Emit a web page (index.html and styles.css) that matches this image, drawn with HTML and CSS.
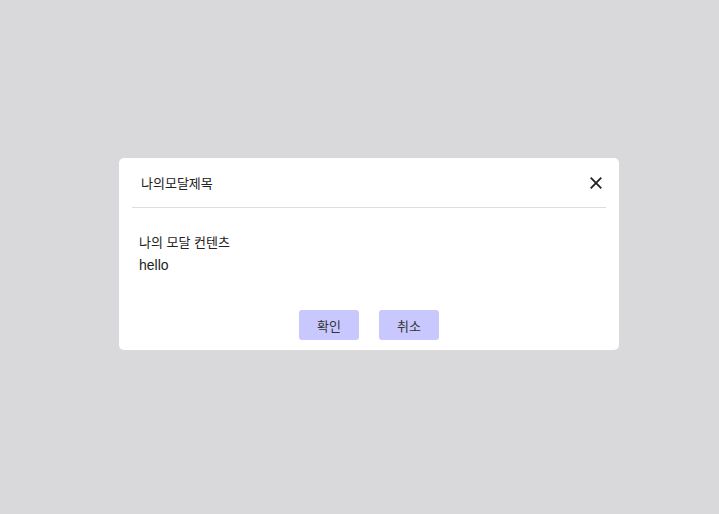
FILE: index.html
```html
<!DOCTYPE html>
<html lang="ko">
<head>
    <meta charset="UTF-8">
    <meta name="viewport" content="width=device-width, initial-scale=1.0">
    <title>Modal</title>
    <link rel="stylesheet" href="styles.css">
</head>
<body>
    <div class="modal">
        <div class="modal-header">
            <span class="modal-title">나의모달제목</span>
            <button class="modal-close" type="button" aria-label="close">
                <svg width="12" height="12" viewBox="0 0 12 12">
                    <path d="M0.7 0.7 L11.3 11.3 M11.3 0.7 L0.7 11.3" stroke="#222" stroke-width="1.8" fill="none"/>
                </svg>
            </button>
        </div>
        <div class="modal-body">
            <div class="ko">나의 모달 컨텐츠</div>
            <div>hello</div>
        </div>
        <div class="modal-footer">
            <button class="modal-btn" type="button">확인</button>
            <button class="modal-btn" type="button">취소</button>
        </div>
    </div>
</body>
</html>
```

FILE: styles.css
```css
body {
    font-family: "Liberation Sans", "Noto Sans CJK KR", sans-serif;
    font-size: 14px;
    color: #222;
    margin: 0;
    height: 100vh;
    box-sizing: border-box;
    padding-left: 19px;
    padding-bottom: 6px;
    display: flex;
    justify-content: center;
    align-items: center;
    background: #d9d9db;
}
.ko {
    font-size: 13px;
}
.modal {
    width: 500px;
    height: 192px;
    background: #fff;
    border-radius: 5px;
    display: flex;
    flex-direction: column;
}
.modal-header {
    height: 49px;
    margin: 0 13px;
    padding: 0 4px 0 9px;
    border-bottom: 1px solid #ddd;
    display: flex;
    align-items: center;
    justify-content: space-between;
}
.modal-title {
    font-size: 13px;
}
.modal-close {
    border: none;
    background: none;
    padding: 0;
    width: 12px;
    height: 12px;
    cursor: pointer;
    display: flex;
}
.modal-body {
    padding: 24px 20px 0;
    line-height: 22px;
    flex: 1;
}
.modal-footer {
    display: flex;
    justify-content: center;
    gap: 20px;
    padding-bottom: 10px;
}
.modal-btn {
    width: 60px;
    height: 30px;
    border: none;
    border-radius: 3px;
    background: #c8c8ff;
    color: #333;
    font-family: inherit;
    font-size: 13px;
    cursor: pointer;
}
```
